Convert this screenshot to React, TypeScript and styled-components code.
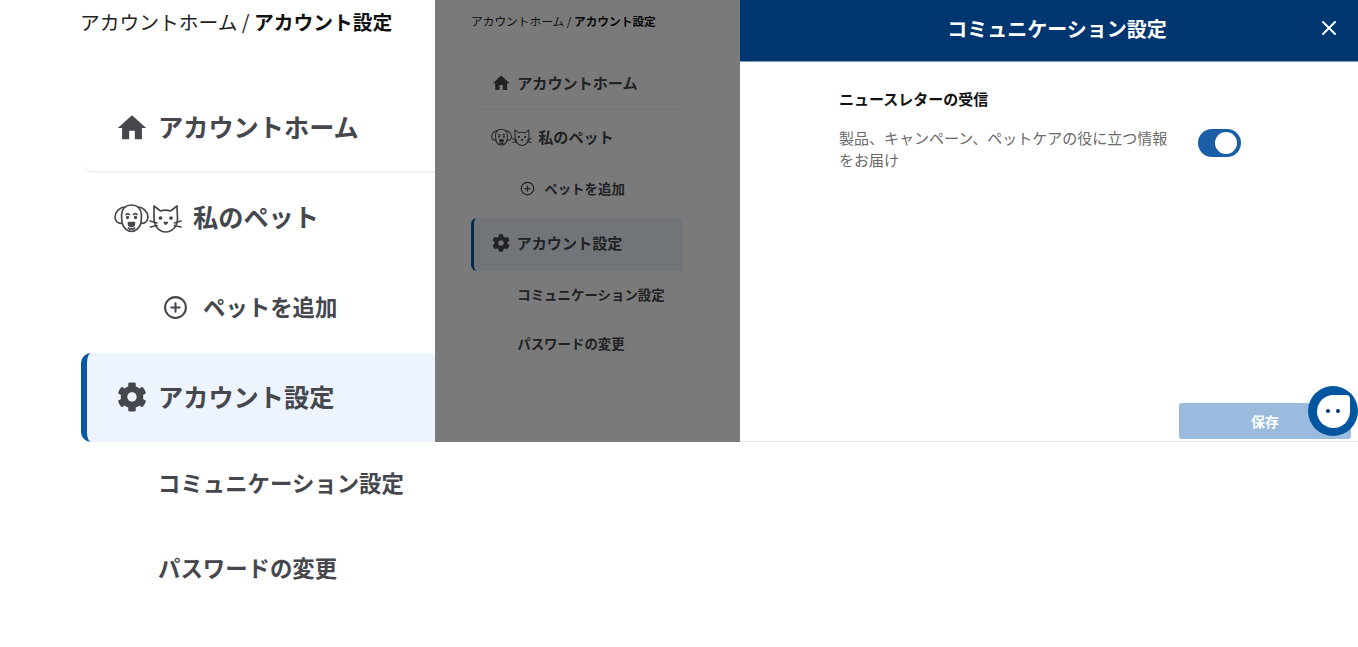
import styled, { createGlobalStyle } from 'styled-components';
import { FaCog } from 'react-icons/fa';
import { MdHome } from 'react-icons/md';
import { FiPlusCircle } from 'react-icons/fi';
import { X } from 'lucide-react';

const GlobalStyle = createGlobalStyle`
  html, body {
    margin: 0;
    height: 100%;
    overflow: hidden;
    background: #fff;
    font-family: "Noto Sans CJK JP", "Noto Sans", sans-serif;
    color: #45474d;
  }
  * { box-sizing: border-box; }
`;

const Page = styled.div`
  display: flex;
  width: 1358px;
  height: 647px;
  position: relative;
  overflow: hidden;
`;

const LeftColumn = styled.div`
  width: 435px;
  flex: none;
  padding-left: 81px;
`;

const Crumbs = styled.div`
  font-size: 19.75px;
  line-height: 24px;
  height: 83px;
  padding-top: 10px;
  margin-left: -1px;
  color: #222;
  white-space: nowrap;
  b { font-weight: 700; color: #111; }
`;

const Nav = styled.nav`
  width: 354px;
`;

const NavItem = styled.a<{ $active?: boolean; $sub?: boolean; $rule?: boolean; $h: number; $lift: number; $indent?: number }>`
  display: flex;
  align-items: center;
  height: ${(p) => p.$h}px;
  padding-bottom: ${(p) => p.$lift}px;
  padding-left: ${(p) => p.$indent ?? 36}px;
  font-weight: 700;
  font-size: ${(p) => (p.$sub ? 22.4 : 25.2)}px;
  white-space: nowrap;
  color: #45474d;
  background: ${(p) => (p.$active ? '#edf4fe' : 'transparent')};
  border-left: ${(p) => (p.$active ? '6px solid #0a57a4' : '0')};
  border-radius: ${(p) => (p.$active ? '10px 0 0 10px' : '0')};
  border-bottom: ${(p) => (p.$rule ? '2px solid #f1f1f1' : '0')};
  ${(p) => p.$rule && 'border-bottom-left-radius: 14px;'}
  ${(p) => p.$active && 'padding-left: 30px;'}
`;

const IconSlot = styled.span<{ $gap?: number }>`
  display: inline-flex;
  align-items: center;
  margin-top: 3px;
  margin-right: ${(p) => p.$gap ?? 12}px;
`;

const RightColumn = styled.div`
  flex: 1;
  display: flex;
  height: 442px;
`;

const Dimmed = styled.div`
  width: 305px;
  flex: none;
  height: 100%;
  position: relative;
  overflow: hidden;
  padding-left: 36px;
  &::after {
    content: '';
    position: absolute;
    inset: 0;
    background: rgba(0, 0, 0, 0.52);
  }
`;

const MiniPage = styled.div`
  zoom: 0.6;
  padding-top: 8px;
`;

const MiniCrumbs = styled(Crumbs)`
  height: 85px;
  font-size: 19.5px;
  padding-top: 15px;
  margin-left: 0;
`;

const Drawer = styled.section`
  width: 618px;
  flex: none;
  display: flex;
  flex-direction: column;
  border-bottom: 1px solid #e6e6e6;
`;

const DrawerHead = styled.header`
  height: 62px;
  flex: none;
  background: #00366f;
  border-bottom: 1px solid #7f9cbc;
  color: #fff;
  display: flex;
  align-items: center;
  justify-content: center;
  position: relative;
  padding-left: 16px;
  padding-bottom: 4px;
  font-size: 20px;
  font-weight: 700;
`;

const CloseButton = styled.button`
  position: absolute;
  right: 17px;
  top: 16px;
  width: 24px;
  height: 24px;
  padding: 0;
  border: 0;
  background: none;
  color: #fff;
  display: flex;
`;

const DrawerBody = styled.div`
  flex: 1;
  padding: 26px 0 0 99px;
`;

const OptionTitle = styled.h3`
  margin: 0 0 17px;
  font-size: 15px;
  line-height: 22px;
  font-weight: 700;
  color: #111;
`;

const OptionRow = styled.div`
  display: flex;
  align-items: flex-start;
  gap: 28px;
`;

const OptionText = styled.p`
  width: 331px;
  margin: 0;
  font-size: 15px;
  line-height: 22px;
  color: #6a6a6a;
`;

const Toggle = styled.span`
  width: 43px;
  height: 28px;
  margin-top: 2px;
  border-radius: 14px;
  background: #1a5ea8;
  display: flex;
  justify-content: flex-end;
  align-items: center;
  padding-right: 4px;
  &::after {
    content: '';
    width: 22px;
    height: 22px;
    border-radius: 50%;
    background: #fff;
  }
`;

const DrawerFoot = styled.footer`
  display: flex;
  justify-content: flex-end;
  padding: 0 7px 2px 0;
`;

const SaveButton = styled.button`
  width: 172px;
  height: 36px;
  border: 0;
  border-radius: 3px;
  background: #9abbdd;
  color: #fff;
  font: 700 14px "Noto Sans CJK JP", sans-serif;
`;

const ChatBubble = styled.div`
  position: absolute;
  left: 1308px;
  top: 386px;
  width: 50px;
  height: 50px;
  border-radius: 50%;
  background: #02569f;
  display: flex;
  align-items: center;
  justify-content: center;
`;

const ChatFace = styled.div`
  width: 33px;
  height: 33px;
  background: #fff;
  border-radius: 50% 4px 50% 50%;
  display: flex;
  align-items: center;
  justify-content: center;
  gap: 6px;
  &::before, &::after {
    content: '';
    width: 4px;
    height: 4px;
    border-radius: 50%;
    background: #00366f;
  }
`;

function PetIcons() {
  return (
    <svg width="68" height="30" viewBox="0 0 68 30" fill="none" stroke="#45474d" strokeWidth="1.7" strokeLinecap="round" strokeLinejoin="round">
      <path d="M11 4C6 4 1 9 1 14C1 18 4 20.500 8 20.500" />
      <path d="M24 4C29 4 34 9 34 14C34 18 31 20.500 27 20.500" />
      <path d="M7.500 12C8 5 12 2 17.500 2C23 2 27 5 27.500 12L27 20C25.500 25 21.500 28.500 17.500 28.500C13.500 28.500 9.500 25 8 20Z" />
      <path d="M12 11.500C13 10.500 14.500 10.500 15.500 11.500M19.500 11.500C20.500 10.500 22 10.500 23 11.500" />
      <circle cx="13.500" cy="14.500" r=".8" fill="#45474d" />
      <circle cx="21.500" cy="14.500" r=".8" fill="#45474d" />
      <path d="M14.500 19.500H20.500C20.500 22.500 18.800 23.500 17.500 23.500C16.200 23.500 14.500 22.500 14.500 19.500Z" fill="#45474d" />
      <path d="M14.500 25C15.500 26.500 19.500 26.500 20.500 25" />
      <path d="M40 3L46.500 8C49.500 7 53.500 7 56.500 8L63 3L63.500 15.500C63.500 23.500 58 29 51.700 29C45.500 29 40 23.500 40 15.500Z" />
      <circle cx="46.500" cy="15" r="1" fill="#45474d" />
      <circle cx="57" cy="15" r="1" fill="#45474d" />
      <path d="M50.300 19.500H53.300L51.800 21.200Z" fill="#45474d" />
      <path d="M36 18L43 20M36.500 24L43 22.500M67 18L60.500 20M67 24L60.500 22.500" />
    </svg>
  );
}

function Menu({ mini }: { mini?: boolean }) {
  // row heights and text lift measured per variant
  const h = mini ? [90, 90, 90, 88, 85, 83] : [90, 90, 90, 89, 85, 85];
  const lift = mini ? [0, 3, 10, 8, 8, 10] : [2, 4, 4, 4, 6, 6];
  return (
    <Nav>
      <NavItem $rule $h={h[0]} $lift={lift[0]} $indent={34}>
        <IconSlot $gap={9}><MdHome size={34} /></IconSlot>
        アカウントホーム
      </NavItem>
      <NavItem $h={h[1]} $lift={lift[1]} $indent={33}>
        <IconSlot $gap={11}><PetIcons /></IconSlot>
        私のペット
      </NavItem>
      <NavItem $sub $h={h[2]} $lift={lift[2]} $indent={82}>
        <IconSlot $gap={15}><FiPlusCircle size={25} /></IconSlot>
        ペットを追加
      </NavItem>
      <NavItem $active $h={h[3]} $lift={lift[3]}>
        <IconSlot $gap={11}><FaCog size={30} /></IconSlot>
        アカウント設定
      </NavItem>
      <NavItem $sub $h={h[4]} $lift={lift[4]} $indent={77}>コミュニケーション設定</NavItem>
      <NavItem $sub $h={h[5]} $lift={lift[5]} $indent={77}>パスワードの変更</NavItem>
    </Nav>
  );
}

function Breadcrumb() {
  return (
    <>
      アカウントホーム / <b>アカウント設定</b>
    </>
  );
}

export default function App() {
  return (
    <Page>
      <GlobalStyle />
      <LeftColumn>
        <Crumbs><Breadcrumb /></Crumbs>
        <Menu />
      </LeftColumn>
      <RightColumn>
        <Dimmed>
          <MiniPage>
            <MiniCrumbs><Breadcrumb /></MiniCrumbs>
            <Menu mini />
          </MiniPage>
        </Dimmed>
        <Drawer>
          <DrawerHead>
            コミュニケーション設定
            <CloseButton aria-label="閉じる"><X size={24} /></CloseButton>
          </DrawerHead>
          <DrawerBody>
            <OptionTitle>ニュースレターの受信</OptionTitle>
            <OptionRow>
              <OptionText>製品、キャンペーン、ペットケアの役に立つ情報をお届け</OptionText>
              <Toggle />
            </OptionRow>
          </DrawerBody>
          <DrawerFoot>
            <SaveButton>保存</SaveButton>
          </DrawerFoot>
        </Drawer>
      </RightColumn>
      <ChatBubble><ChatFace /></ChatBubble>
    </Page>
  );
}
